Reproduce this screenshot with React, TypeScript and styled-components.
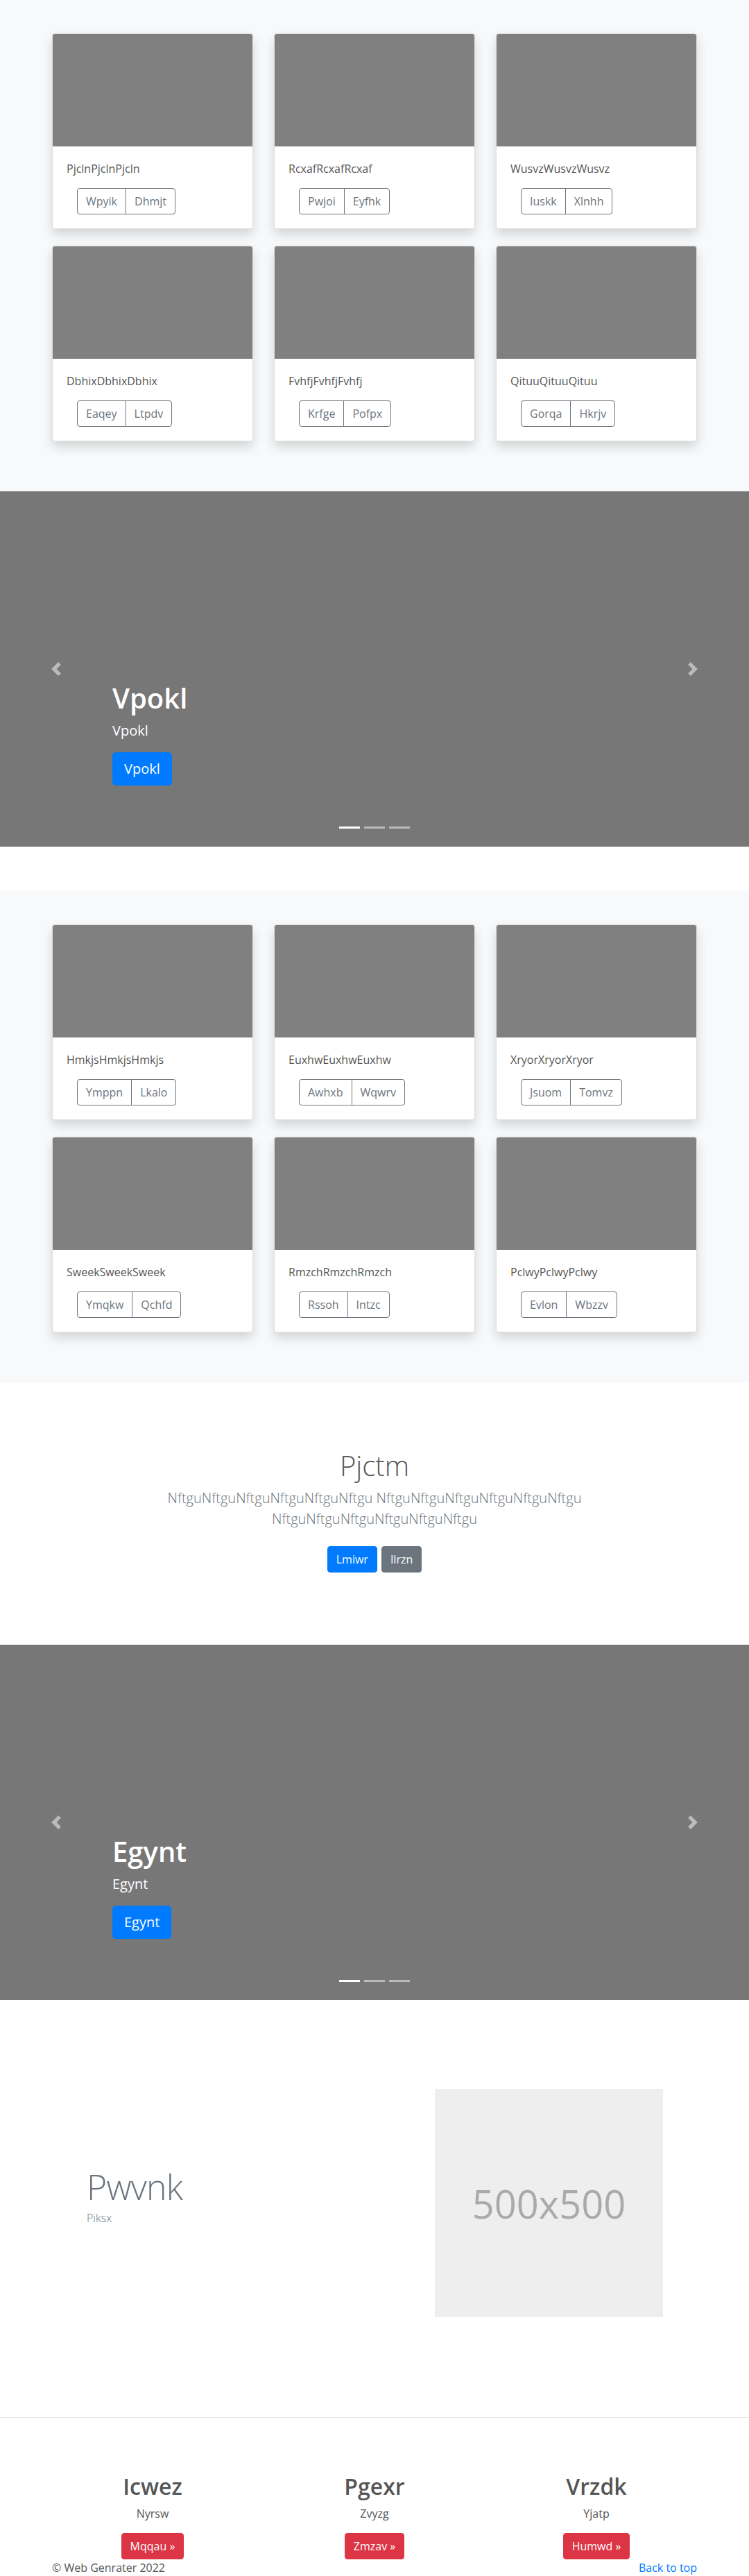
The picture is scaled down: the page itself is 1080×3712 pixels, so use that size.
import React from "react";
import styled, { createGlobalStyle } from "styled-components";

const GlobalStyle = createGlobalStyle`
  html, body { margin: 0; padding: 0; }
  body {
    font-family: "Open Sans", "Noto Sans", sans-serif;
    font-size: 16px;
    line-height: 1.5;
    color: #555;
    background: #fff;
  }
  *, *::before, *::after { box-sizing: border-box; }
`;

const Container = styled.div<{ $max?: number; $pad?: number }>`
  width: 100%;
  max-width: ${(p) => p.$max ?? 960}px;
  padding: 0 ${(p) => p.$pad ?? 15}px;
  margin: 0 auto;
`;

/* ---------- Album ---------- */
const Album = styled.section`
  background: #f8f9fa;
  padding: 48px 0 72px;
`;

const CardGrid = styled.div`
  display: grid;
  grid-template-columns: repeat(3, 290px);
  column-gap: 30px;
  row-gap: 24px;
`;

const Card = styled.div`
  background: #fff;
  border: 1px solid rgba(0, 0, 0, 0.125);
  border-radius: 4px;
  box-shadow: 0 8px 16px rgba(0, 0, 0, 0.15);
  overflow: hidden;
`;

const Thumb = styled.div`
  height: 162px;
  background: #808080;
`;

const CardBody = styled.div`
  padding: 20px;
`;

const CardText = styled.p`
  margin: 0 0 16px;
`;

const BtnGroup = styled.div`
  display: inline-flex;
  margin-left: 15px;
`;

const OutlineBtn = styled.button`
  font-family: inherit;
  font-size: 16px;
  line-height: 1.5;
  padding: 6px 12px;
  color: #6c757d;
  background: transparent;
  border: 1px solid #6c757d;
  &:first-child {
    border-radius: 4px 0 0 4px;
  }
  &:last-child {
    border-radius: 0 4px 4px 0;
    margin-left: -1px;
  }
`;

type CardData = { title: string; a: string; b: string };

const AlbumSection: React.FC<{ cards: CardData[] }> = ({ cards }) => (
  <Album>
    <Container>
      <CardGrid>
        {cards.map((c) => (
          <Card key={c.title}>
            <Thumb />
            <CardBody>
              <CardText>{c.title}</CardText>
              <BtnGroup>
                <OutlineBtn type="button">{c.a}</OutlineBtn>
                <OutlineBtn type="button">{c.b}</OutlineBtn>
              </BtnGroup>
            </CardBody>
          </Card>
        ))}
      </CardGrid>
    </Container>
  </Album>
);

/* ---------- Carousel ---------- */
const CarouselBox = styled.div`
  position: relative;
  height: 512px;
  background: #777;
  margin-bottom: 64px;
  overflow: hidden;
`;

const Caption = styled.div`
  position: absolute;
  left: 15%;
  right: 15%;
  bottom: 52px;
  padding: 20px 0;
  color: #fff;
  text-align: left;
  z-index: 10;
`;

const CaptionTitle = styled.h1`
  font-size: 40px;
  font-weight: 600;
  line-height: 1.2;
  margin: 0 0 8px;
`;

const CaptionText = styled.p`
  font-size: 20px;
  margin: 0 0 16px;
`;

const BtnLg = styled.a`
  display: inline-block;
  font-size: 20px;
  line-height: 1.5;
  padding: 8px 16px;
  border-radius: 5px;
  background: #007bff;
  border: 1px solid #007bff;
  color: #fff;
  text-decoration: none;
`;

const BtnLine = styled.p`
  margin: 0 0 16px;
`;

const Control = styled.div<{ $side: "left" | "right" }>`
  position: absolute;
  top: 0;
  bottom: 0;
  ${(p) => p.$side}: 0;
  width: 15%;
  display: flex;
  align-items: center;
  justify-content: center;
  opacity: 0.5;
`;

const Indicators = styled.ol`
  position: absolute;
  left: 0;
  right: 0;
  bottom: 26px;
  margin: 0;
  padding: 0;
  list-style: none;
  display: flex;
  justify-content: center;
`;

const Indicator = styled.li<{ $active?: boolean }>`
  width: 30px;
  height: 3px;
  margin: 0 3px;
  background: #fff;
  opacity: ${(p) => (p.$active ? 1 : 0.5)};
`;

const Chevron: React.FC<{ dir: "prev" | "next" }> = ({ dir }) => (
  <svg width="20" height="20" viewBox="0 0 8 8" fill="#fff">
    <path
      d={
        dir === "prev"
          ? "M5.25 0l-4 4 4 4 1.5-1.5L4.25 4l2.5-2.5L5.25 0z"
          : "M2.75 0l-1.5 1.5L3.75 4l-2.5 2.5L2.75 8l4-4-4-4z"
      }
    />
  </svg>
);

const Carousel: React.FC<{ text: string }> = ({ text }) => (
  <CarouselBox>
    <Caption>
      <CaptionTitle>{text}</CaptionTitle>
      <CaptionText>{text}</CaptionText>
      <BtnLine>
        <BtnLg href="#">{text}</BtnLg>
      </BtnLine>
    </Caption>
    <Control $side="left">
      <Chevron dir="prev" />
    </Control>
    <Control $side="right">
      <Chevron dir="next" />
    </Control>
    <Indicators>
      <Indicator $active />
      <Indicator />
      <Indicator />
    </Indicators>
  </CarouselBox>
);

/* ---------- Jumbotron ---------- */
const Jumbo = styled.section`
  padding: 96px 0;
  text-align: center;
`;

const JumboHeading = styled.h1`
  font-size: 40px;
  font-weight: 300;
  line-height: 1.2;
  margin: 0 0 8px;
`;

const Lead = styled.p`
  font-size: 20px;
  font-weight: 300;
  color: #6c757d;
  margin: 0 0 16px;
`;

const ButtonRow = styled.div`
  display: flex;
  justify-content: center;
  gap: 6px;
  padding: 8px 0;
`;

const Btn = styled.a<{ $variant: "primary" | "secondary" | "danger" }>`
  display: inline-block;
  font-size: 16px;
  line-height: 1.5;
  padding: 6px 12px;
  border-radius: 4px;
  color: #fff;
  text-decoration: none;
  background: ${(p) =>
    p.$variant === "primary" ? "#007bff" : p.$variant === "danger" ? "#dc3545" : "#6c757d"};
  border: 1px solid
    ${(p) =>
      p.$variant === "primary" ? "#007bff" : p.$variant === "danger" ? "#dc3545" : "#6c757d"};
`;

/* ---------- Featurette ---------- */
const Featurette = styled.div`
  display: grid;
  grid-template-columns: 1fr 1fr;
  align-items: center;
  padding-top: 64px;
  padding-bottom: 64px;
`;

const FeatText = styled.div`
  padding-left: 50px;
`;

const FeatHeading = styled.h2`
  font-size: 50px;
  font-weight: 300;
  line-height: 1;
  letter-spacing: -0.8px;
  color: #6c757d;
  margin: 0 0 8px;
`;

const FeatSub = styled.p`
  font-weight: 300;
  color: #6c757d;
  margin: 0 0 16px;
`;

const Placeholder = styled.div`
  width: 329px;
  height: 329px;
  justify-self: end;
  margin-right: 49px;
  background: #eee;
  color: #aaa;
  font-size: 56px;
  display: flex;
  align-items: center;
  justify-content: center;
`;

const Divider = styled.hr`
  border: 0;
  border-top: 1px solid rgba(0, 0, 0, 0.1);
  margin: 80px 0;
`;

/* ---------- Marketing ---------- */
const Marketing = styled.div`
  display: grid;
  grid-template-columns: repeat(3, 1fr);
`;

const MarketCol = styled.div`
  padding: 0 15px;
  text-align: center;
`;

const MarketHeading = styled.h2`
  font-size: 32px;
  font-weight: 600;
  line-height: 1.2;
  margin: 0 0 8px;
`;

const MarketText = styled.p`
  margin: 0 0 16px;
`;

const Footer = styled.footer`
  display: flex;
  justify-content: space-between;
  line-height: 24px;
`;

const FooterText = styled.p`
  margin: 0;
`;

const TopLink = styled.a`
  color: #007bff;
  text-decoration: none;
`;

const album1: CardData[] = [
  { title: "PjclnPjclnPjcln", a: "Wpyik", b: "Dhmjt" },
  { title: "RcxafRcxafRcxaf", a: "Pwjoi", b: "Eyfhk" },
  { title: "WusvzWusvzWusvz", a: "Iuskk", b: "Xlnhh" },
  { title: "DbhixDbhixDbhix", a: "Eaqey", b: "Ltpdv" },
  { title: "FvhfjFvhfjFvhfj", a: "Krfge", b: "Pofpx" },
  { title: "QituuQituuQituu", a: "Gorqa", b: "Hkrjv" },
];

const album2: CardData[] = [
  { title: "HmkjsHmkjsHmkjs", a: "Ymppn", b: "Lkalo" },
  { title: "EuxhwEuxhwEuxhw", a: "Awhxb", b: "Wqwrv" },
  { title: "XryorXryorXryor", a: "Jsuom", b: "Tomvz" },
  { title: "SweekSweekSweek", a: "Ymqkw", b: "Qchfd" },
  { title: "RmzchRmzchRmzch", a: "Rssoh", b: "Intzc" },
  { title: "PclwyPclwyPclwy", a: "Evlon", b: "Wbzzv" },
];

const marketing = [
  { h: "Icwez", t: "Nyrsw", b: "Mqqau »" },
  { h: "Pgexr", t: "Zvyzg", b: "Zmzav »" },
  { h: "Vrzdk", t: "Yjatp", b: "Humwd »" },
];

const word = "NftguNftguNftguNftguNftguNftgu";

export default function App() {
  return (
    <>
      <GlobalStyle />
      <AlbumSection cards={album1} />
      <Carousel text="Vpokl" />
      <AlbumSection cards={album2} />
      <Jumbo>
        <Container $max={640}>
          <JumboHeading>Pjctm</JumboHeading>
          <Lead>{`${word} ${word} ${word}`}</Lead>
          <ButtonRow>
            <Btn href="#" $variant="primary">Lmiwr</Btn>
            <Btn href="#" $variant="secondary">Ilrzn</Btn>
          </ButtonRow>
        </Container>
      </Jumbo>
      <Carousel text="Egynt" />
      <Container>
        <Featurette>
          <FeatText>
            <FeatHeading>Pwvnk</FeatHeading>
            <FeatSub>Piksx</FeatSub>
          </FeatText>
          <Placeholder>500x500</Placeholder>
        </Featurette>
      </Container>
      <Divider />
      <Container $pad={0}>
        <Marketing>
          {marketing.map((m) => (
            <MarketCol key={m.h}>
              <MarketHeading>{m.h}</MarketHeading>
              <MarketText>{m.t}</MarketText>
              <Btn href="#" $variant="danger">{m.b}</Btn>
            </MarketCol>
          ))}
        </Marketing>
      </Container>
      <Container>
        <Footer>
          <FooterText>© Web Genrater 2022</FooterText>
          <TopLink href="#">Back to top</TopLink>
        </Footer>
      </Container>
    </>
  );
}
